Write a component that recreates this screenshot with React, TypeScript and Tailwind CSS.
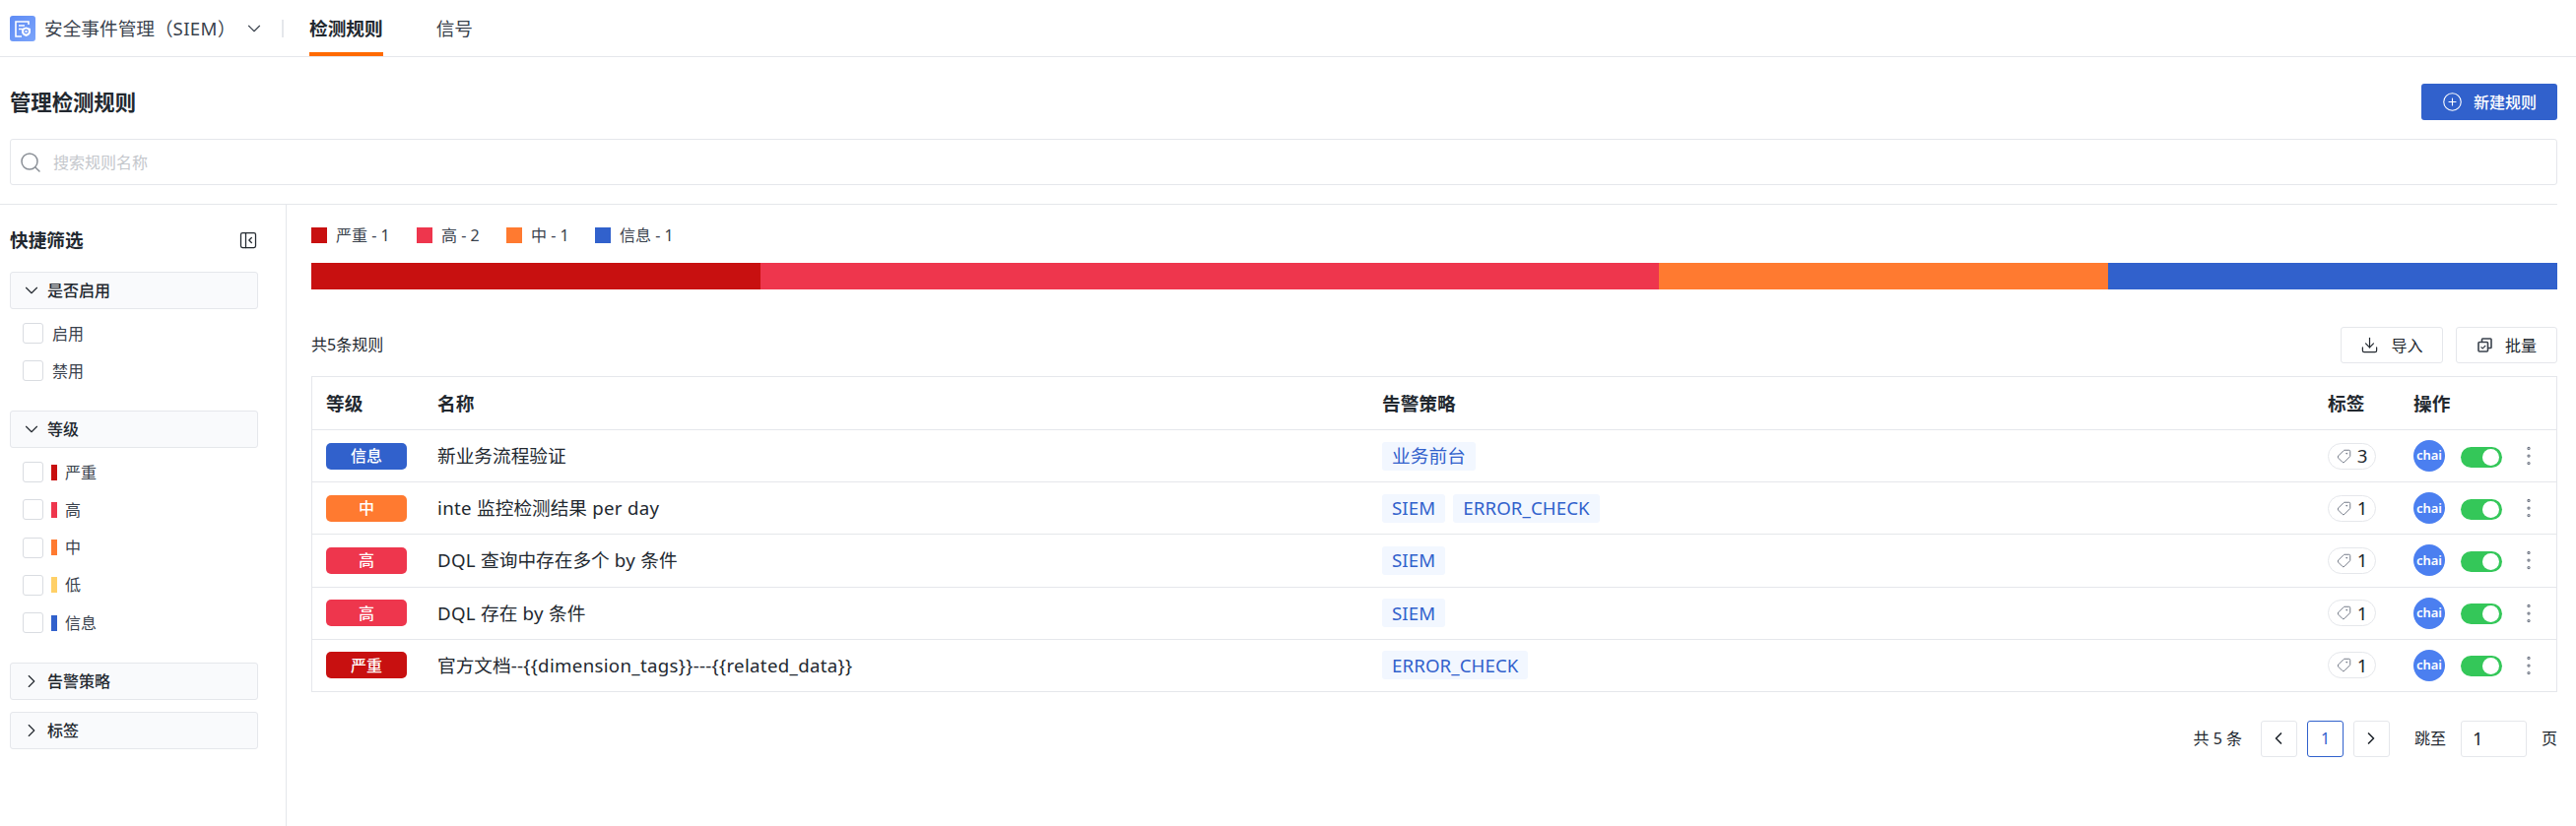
import React from 'react';
import { ChevronDown, ChevronLeft, ChevronRight, CirclePlus, Download, EllipsisVertical, PanelLeftClose, Search, Tag } from 'lucide-react';

const FONT = 'font-["Noto_Sans","Noto_Sans_CJK_SC",sans-serif]';

const levels: Record<string, string> = {
  严重: 'bg-[#c81010]',
  高: 'bg-[#ee364d]',
  中: 'bg-[#ff7a30]',
  低: 'bg-[#ffd067]',
  信息: 'bg-[#3161cc]',
};

const rules = [
  { level: '信息', name: '新业务流程验证', policies: ['业务前台'], labels: 3 },
  { level: '中', name: 'inte 监控检测结果 per day', policies: ['SIEM', 'ERROR_CHECK'], labels: 1 },
  { level: '高', name: 'DQL 查询中存在多个 by 条件', policies: ['SIEM'], labels: 1 },
  { level: '高', name: 'DQL 存在 by 条件', policies: ['SIEM'], labels: 1 },
  { level: '严重', name: '官方文档--{{dimension_tags}}---{{related_data}}', policies: ['ERROR_CHECK'], labels: 1 },
];

// latin runs sit a little wider than the font's own advances in the screenshot
const Mixed: React.FC<{ text: string }> = ({ text }) => (
  <>
    {text.split(/([\x20-\x7e]+)/).map((part, idx) =>
      idx % 2 ? <span key={idx} className="tracking-[0.32px]">{part}</span> : part
    )}
  </>
);

const Logo = () => (
  <svg width="26" height="26" viewBox="0 0 26 26" className="shrink-0">
    <defs>
      <linearGradient id="logo-bg" x1="0" y1="0" x2="1" y2="1">
        <stop offset="0" stopColor="#5f8cf5" />
        <stop offset="1" stopColor="#7ba4fa" />
      </linearGradient>
    </defs>
    <rect width="26" height="26" rx="3" fill="url(#logo-bg)" />
    <path d="M19 9V6H6v15h6" fill="none" stroke="#fff" strokeWidth="1.6" />
    <path d="M9 10h6M9 13.5h3" fill="none" stroke="#fff" strokeWidth="1.6" />
    <path d="M16.5 11.5l4.5 1.4v3.6c0 2.3-2 3.7-4.5 4.5-2.5-.8-4.5-2.2-4.5-4.5v-3.6z" fill="#fff" />
    <circle cx="16.5" cy="16" r="1.8" fill="none" stroke="#5f8cf5" strokeWidth="1.2" />
  </svg>
);

const BatchIcon = () => (
  <svg width="17" height="17" viewBox="0 0 17 17" fill="none" stroke="#3a424d" strokeWidth="1.6" className="shrink-0">
    <rect x="2" y="5.5" width="9.5" height="9.5" rx="1" />
    <path d="M5.5 5.5V2.8a.8.8 0 0 1 .8-.8h7.9a.8.8 0 0 1 .8.8v7.9a.8.8 0 0 1-.8.8h-2.7" />
    <path d="M4.5 10.3l1.7 1.7 3-3" strokeWidth="1.2" />
  </svg>
);

const Checkbox = () => <span className="h-[21px] w-[21px] shrink-0 rounded-[3px] border border-[#d9dce1] bg-white" />;

const FilterHead: React.FC<{ title: string; open?: boolean; className?: string }> = ({ title, open, className }) => (
  <div className={`flex h-[38px] w-[252px] items-center gap-[5px] rounded-[3px] border border-[#e5e7eb] bg-[#f9fafc] pl-[10px] text-[16px] font-medium ${className ?? ''}`}>
    {open ? <ChevronDown size={22} strokeWidth={1.25} /> : <ChevronRight size={22} strokeWidth={1.25} />}
    {title}
  </div>
);

const Sidebar = () => (
  <aside className="w-[280px] shrink-0 pr-[18px] pt-[24px]">
    <div className="flex h-[24px] w-[252px] items-center justify-between">
      <span className="text-[18.67px] font-semibold">快捷筛选</span>
      <PanelLeftClose size={20} strokeWidth={1.5} />
    </div>

    <FilterHead title="是否启用" open className="mt-[20px]" />
    <div className="mt-[14px] flex flex-col gap-[17px] pl-[13px] text-[16px] text-[#3a424d]">
      {['启用', '禁用'].map((label) => (
        <label key={label} className="flex h-[21px] items-center gap-[9px]">
          <Checkbox />
          {label}
        </label>
      ))}
    </div>

    <FilterHead title="等级" open className="mt-[30px]" />
    <div className="mt-[14px] flex flex-col gap-[17.3px] pl-[13px] text-[16px] text-[#3a424d]">
      {Object.keys(levels).map((label) => (
        <label key={label} className="flex h-[21px] items-center gap-[8px]">
          <Checkbox />
          <span className={`h-[16px] w-[6px] ${levels[label]}`} />
          {label}
        </label>
      ))}
    </div>

    <FilterHead title="告警策略" className="mt-[30px]" />
    <FilterHead title="标签" className="mt-[12px]" />
  </aside>
);

const Legend = () => (
  <div className="flex h-[16px] items-center text-[16px] text-[#3a424d]">
    {[
      { label: '严重', count: 1, width: 'w-[107px]' },
      { label: '高', count: 2, width: 'w-[91px]' },
      { label: '中', count: 1, width: 'w-[90px]' },
      { label: '信息', count: 1, width: 'w-[107px]' },
    ].map((item) => (
      <div key={item.label} className={`flex items-center gap-[9px] ${item.width}`}>
        <span className={`h-[16px] w-[16px] ${levels[item.label]}`} />
        <span>{item.label} - {item.count}</span>
      </div>
    ))}
  </div>
);

const RuleRow: React.FC<{ rule: (typeof rules)[number] }> = ({ rule }) => (
  <div className="grid h-[53.2px] grid-cols-[127px_959px_960px_87px_1fr] items-center border-t border-[#e5e7eb] text-[18.67px]">
    <div className="pl-[14px]">
      <div className={`flex h-[27px] w-[82px] items-center justify-center rounded-[5px] text-[16px] font-medium text-white ${levels[rule.level]}`}>
        {rule.level}
      </div>
    </div>
    <div><Mixed text={rule.name} /></div>
    <div className="flex gap-[8px]">
      {rule.policies.map((policy) => (
        <span key={policy} className="flex h-[29px] items-center rounded-[3px] bg-[#f2f7ff] px-[10px] tracking-[0.1px] text-[#3161cc]">
          {policy}
        </span>
      ))}
    </div>
    <div>
      <span className="flex h-[27px] w-[49px] items-center justify-center gap-[6px] rounded-full border border-[#e5e7eb]">
        <Tag size={15} strokeWidth={1.5} className="-scale-x-100 text-[#6b7280]" />
        {rule.labels}
      </span>
    </div>
    <div className="flex items-center">
      <span className="flex h-[32px] w-[32px] items-center justify-center rounded-full bg-[#4b7ff0] text-[13px] font-semibold text-white">chai</span>
      <span className="ml-[16px] mt-[2px] flex h-[21px] w-[42px] items-center justify-end rounded-full bg-[#34c759] pr-[3px]">
        <span className="h-[17px] w-[17px] rounded-full bg-white" />
      </span>
      <EllipsisVertical size={26} strokeWidth={1} className="ml-[14px] text-[#6b7280]" />
    </div>
  </div>
);

const PageButton: React.FC<{ children: React.ReactNode; active?: boolean }> = ({ children, active }) => (
  <span className={`flex h-[37px] w-[37px] items-center justify-center rounded-[3px] border ${active ? 'border-[#3161cc] text-[#3161cc]' : 'border-[#e5e7eb]'}`}>
    {children}
  </span>
);

export default function App() {
  return (
    <div className={`h-[839px] overflow-hidden bg-white text-[#22282f] ${FONT}`}>
      <nav className="flex h-[58px] items-end border-b border-[#e5e7eb] pl-[10px]">
        <div className="flex h-[57px] items-center">
          <Logo />
          <span className="ml-[9px] w-[202px] text-[18.67px] text-[#3a424d]"><Mixed text="安全事件管理（SIEM）" /></span>
          <ChevronDown size={22} strokeWidth={1.25} className="text-[#3a424d]" />
          <span className="ml-[17px] h-[18px] w-[2px] bg-[#e5e7eb]" />
          <div className="relative ml-[26px] flex h-[57px] items-center text-[18.67px] font-semibold">
            检测规则
            <span className="absolute inset-x-0 bottom-0 h-[4px] bg-[#ff6a00]" />
          </div>
          <span className="ml-[54px] text-[18.67px] text-[#3a424d]">信号</span>
        </div>
      </nav>

      <main className="pl-[10px] pr-[19px]">
        <div className="flex items-center justify-between pt-[27px]">
          <h1 className="text-[21.33px] font-semibold">管理检测规则</h1>
          <button className="flex h-[37px] w-[138px] items-center justify-center gap-[11px] rounded-[3px] bg-[#3161cc] text-[16px] font-medium text-white">
            <CirclePlus size={21} strokeWidth={1.25} />
            新建规则
          </button>
        </div>

        <div className="mt-[19px] flex h-[47px] items-center gap-[11px] rounded-[3px] border border-[#e5e7eb] pl-[8px] text-[16px] text-[#c4c7cc]">
          <Search size={24} strokeWidth={1.5} className="text-[#8a8f96]" />
          搜索规则名称
        </div>
      </main>

      <div className="mr-[19px] mt-[19px] flex h-[632px] border-t border-[#e5e7eb] pl-[10px]">
        <Sidebar />
        <section className="min-w-0 flex-1 border-l border-[#e5e7eb] pl-[25px] pt-[23px]">
          <Legend />
          <div className="mt-[20px] flex h-[27px]">
            <div className="w-1/5 bg-[#c81010]" />
            <div className="w-2/5 bg-[#ee364d]" />
            <div className="w-1/5 bg-[#ff7a30]" />
            <div className="w-1/5 bg-[#3161cc]" />
          </div>

          <div className="mt-[38px] flex h-[37px] items-center justify-between text-[16px]">
            <span className="-mt-[1px]">共5条规则</span>
            <div className="flex gap-[13px]">
              <button className="flex h-[37px] w-[104px] items-center justify-center gap-[12px] rounded-[3px] border border-[#e5e7eb]">
                <Download size={19} strokeWidth={1.5} />
                导入
              </button>
              <button className="flex h-[37px] w-[103px] items-center justify-center gap-[12px] rounded-[3px] border border-[#e5e7eb]">
                <BatchIcon />
                批量
              </button>
            </div>
          </div>

          <div className="mt-[13px] border-x border-b border-t border-[#e5e7eb]">
            <div className="grid h-[53px] grid-cols-[127px_959px_960px_87px_1fr] items-center text-[18.67px] font-semibold">
              <div className="pl-[14px]">等级</div>
              <div>名称</div>
              <div>告警策略</div>
              <div>标签</div>
              <div>操作</div>
            </div>
            {rules.map((rule) => (
              <RuleRow key={rule.name} rule={rule} />
            ))}
          </div>

          <div className="mt-[29px] flex h-[37px] items-center justify-end text-[16px]">
            <span className="mr-[19px]">共 5 条</span>
            <div className="flex gap-[10px]">
              <PageButton><ChevronLeft size={20} /></PageButton>
              <PageButton active>1</PageButton>
              <PageButton><ChevronRight size={20} /></PageButton>
            </div>
            <span className="ml-[25px]">跳至</span>
            <span className="ml-[15px] flex h-[37px] w-[67px] items-center rounded-[3px] border border-[#e5e7eb] pl-[11px] text-[18.67px]">1</span>
            <span className="ml-[15px]">页</span>
          </div>
        </section>
      </div>
    </div>
  );
}
